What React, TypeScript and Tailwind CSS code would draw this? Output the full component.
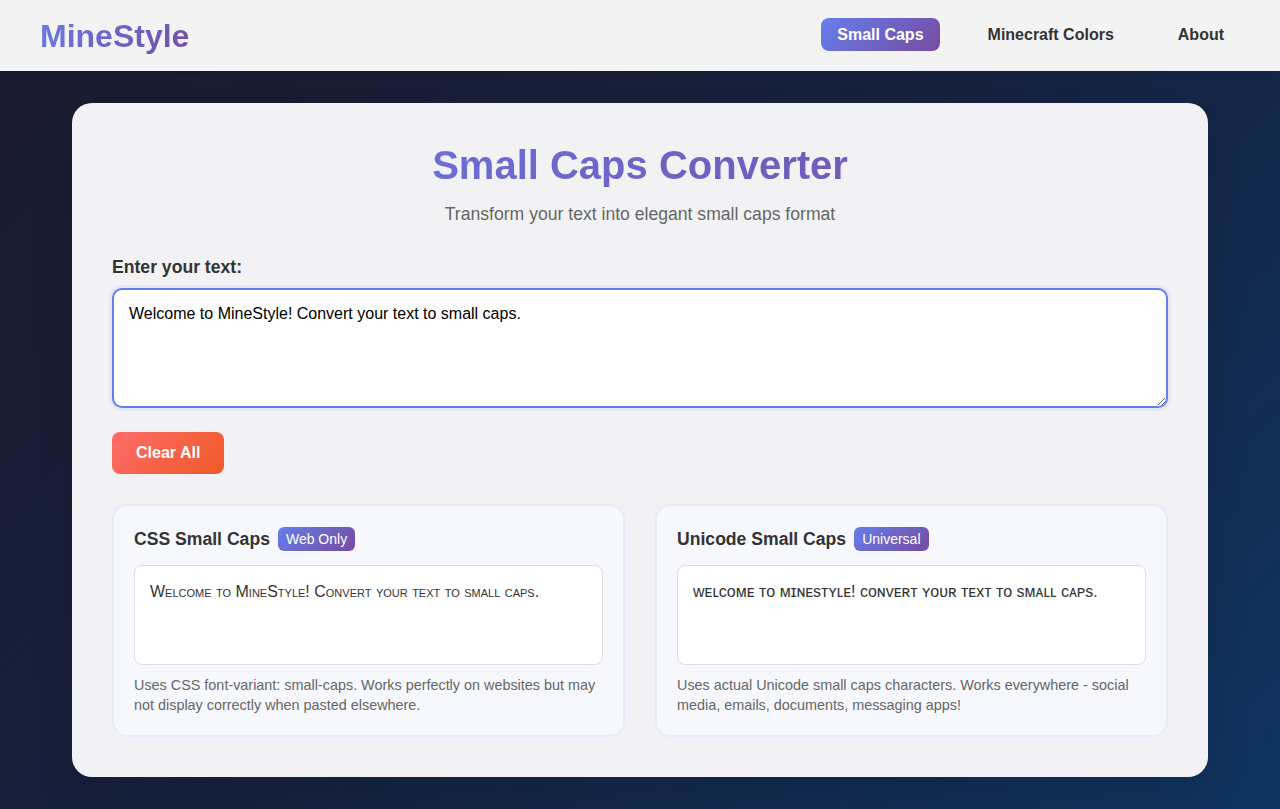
import React, { useState } from 'react';

const smallCapsMap: Record<string, string> = {
  a: 'ᴀ', b: 'ʙ', c: 'ᴄ', d: 'ᴅ', e: 'ᴇ', f: 'ꜰ', g: 'ɢ', h: 'ʜ', i: 'ɪ', j: 'ᴊ', k: 'ᴋ', l: 'ʟ', m: 'ᴍ',
  n: 'ɴ', o: 'ᴏ', p: 'ᴘ', q: 'ǫ', r: 'ʀ', s: 's', t: 'ᴛ', u: 'ᴜ', v: 'ᴠ', w: 'ᴡ', x: 'x', y: 'ʏ', z: 'ᴢ',
};

const toSmallCaps = (text: string) =>
  text
    .split('')
    .map((ch) => smallCapsMap[ch.toLowerCase()] ?? ch)
    .join('');

const navLinks = [
  { label: 'Small Caps', active: true },
  { label: 'Minecraft Colors', active: false },
  { label: 'About', active: false },
];

const App = () => {
  const [text, setText] = useState('Welcome to MineStyle! Convert your text to small caps.');

  return (
    <div className="min-h-screen font-['Liberation_Sans',Arial,sans-serif] bg-[linear-gradient(135deg,#1a1a2e_0%,#16213e_50%,#0f3460_100%)]">
      {/* Header */}
      <header className="h-[71px] bg-[#f3f3f4] px-10 flex items-center justify-between shadow-[0_2px_10px_rgba(0,0,0,0.1)]">
        <h1 className="text-[32px] font-bold bg-[linear-gradient(135deg,#667eea_0%,#764ba2_100%)] bg-clip-text text-transparent">
          MineStyle
        </h1>
        <nav className="flex items-center gap-8 -mt-[2px]">
          {navLinks.map((link) => (
            <a
              key={link.label}
              href="#"
              className={
                link.active
                  ? 'h-[33px] px-4 flex items-center rounded-lg font-bold text-white bg-[linear-gradient(135deg,#667eea_0%,#764ba2_100%)]'
                  : 'h-[33px] px-4 flex items-center rounded-lg font-bold text-[#333]'
              }
            >
              {link.label}
            </a>
          ))}
        </nav>
      </header>

      {/* Main */}
      <main className="pt-8 pb-8 px-[72px]">
        <div className="bg-[#f2f2f4] rounded-[20px] p-10 shadow-[0_20px_40px_rgba(0,0,0,0.1)]">
          <h2 className="text-center text-[40px] font-bold leading-[44px] bg-[linear-gradient(135deg,#667eea_0%,#764ba2_100%)] bg-clip-text text-transparent">
            Small Caps Converter
          </h2>
          <p className="text-center text-[17.6px] leading-[26px] text-[#666] mt-[14px]">
            Transform your text into elegant small caps format
          </p>

          <label className="block mt-[27px] mb-[8px] text-[17.6px] leading-[26px] font-bold text-[#333]">
            Enter your text:
          </label>
          <textarea
            value={text}
            onChange={(e) => setText(e.target.value)}
            className="block w-full h-[120px] px-[15px] py-[12px] text-base text-black bg-white border-2 border-[#667eea] rounded-[10px] outline-none shadow-[0_0_0_3px_rgba(102,126,234,0.1)] resize-y"
          />

          <button
            onClick={() => setText('')}
            className="mt-6 px-6 py-3 rounded-lg text-white font-bold text-base leading-[18px] bg-[linear-gradient(135deg,#ff6b6b_0%,#ee5a24_100%)]"
          >
            Clear All
          </button>

          <div className="grid grid-cols-2 gap-[30px] mt-[30px]">
            {/* CSS small caps */}
            <div className="bg-[#f7f8fd] border-2 border-[#e6ebfb] rounded-[15px] p-5">
              <div className="flex items-center gap-2">
                <h3 className="text-[17.6px] leading-[26px] font-bold text-[#333]">CSS Small Caps</h3>
                <span className="px-2 py-[2px] rounded-md text-sm text-white bg-[linear-gradient(135deg,#667eea_0%,#764ba2_100%)]">
                  Web Only
                </span>
              </div>
              <div className="mt-[13px] h-[100px] bg-white border border-[#ddd] rounded-lg px-[15px] py-[14px] text-base leading-6 text-[#333] [font-variant:small-caps]">
                {text}
              </div>
              <p className="mt-[10px] text-[14.4px] leading-5 text-[#666]">
                Uses CSS font-variant: small-caps. Works perfectly on websites but may not display correctly when pasted elsewhere.
              </p>
            </div>

            {/* Unicode small caps */}
            <div className="bg-[#f7f8fd] border-2 border-[#e6ebfb] rounded-[15px] p-5">
              <div className="flex items-center gap-2">
                <h3 className="text-[17.6px] leading-[26px] font-bold text-[#333]">Unicode Small Caps</h3>
                <span className="px-2 py-[2px] rounded-md text-sm text-white bg-[linear-gradient(135deg,#667eea_0%,#764ba2_100%)]">
                  Universal
                </span>
              </div>
              <div className="mt-[13px] h-[100px] bg-white border border-[#ddd] rounded-lg px-[15px] py-[14px] text-base leading-6 text-[#333]">
                {toSmallCaps(text)}
              </div>
              <p className="mt-[10px] text-[14.4px] leading-5 text-[#666]">
                Uses actual Unicode small caps characters. Works everywhere - social media, emails, documents, messaging apps!
              </p>
            </div>
          </div>
        </div>
      </main>
    </div>
  );
};

export default App;
